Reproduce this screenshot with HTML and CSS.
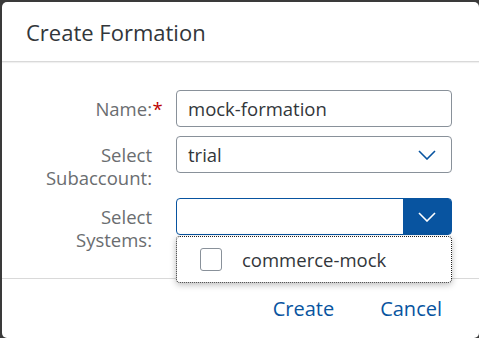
FILE: index.html
```html
<!DOCTYPE html>
<html>
<head>
<meta charset="utf-8">
<link rel="stylesheet" href="styles.css">
</head>
<body>
<div class="dialog">
  <div class="header"><h1 class="title">Create Formation</h1></div>
  <div class="content">
    <div class="form">
      <label class="label req">Name:<span class="ast">*</span></label>
      <div class="field"><span class="value">mock-formation</span></div>

      <label class="label two"><span class="line">Select</span><span class="line">Subaccount:</span></label>
      <div class="field select">
        <span class="value">trial</span>
        <span class="arrow">
          <svg width="18" height="10" viewBox="0 0 18 10"><path d="M1 1 L9 9 L17 1" fill="none" stroke="#0854a0" stroke-width="1.6"/></svg>
        </span>
      </div>

      <label class="label two"><span class="line">Select</span><span class="line">Systems:</span></label>
      <div class="combo">
        <div class="field select focused">
          <span class="value"></span>
          <span class="arrow filled">
            <svg width="18" height="10" viewBox="0 0 18 10"><path d="M1 1 L9 9 L17 1" fill="none" stroke="#ffffff" stroke-width="1.6"/></svg>
          </span>
        </div>
        <div class="popover">
          <div class="item">
            <span class="checkbox"></span>
            <span class="item-text">commerce-mock</span>
          </div>
        </div>
      </div>
    </div>
  </div>
  <div class="footer">
    <button class="btn">Create</button>
    <button class="btn">Cancel</button>
  </div>
</div>
</body>
</html>
```
FILE: styles.css
```css
html, body {
  margin: 0;
  padding: 0;
}
body {
  background: #3a3a3a;
  font-family: "Open Sans", "Noto Sans", sans-serif;
  overflow: hidden;
  width: 479px;
  height: 338px;
}
.dialog {
  margin: 2px 0 0 2px;
  width: 477px;
  height: 336px;
  background: #fff;
  border-radius: 5px;
  display: flex;
  flex-direction: column;
}
.header {
  height: 59px;
  flex: none;
  border-bottom: 1px solid #d9d9d9;
  box-shadow: 0 1px 1px rgba(0,0,0,0.06);
  display: flex;
  align-items: center;
  padding-left: 24px;
}
.title {
  margin: 0;
  font-size: 22px;
  font-weight: normal;
  color: #32363a;
}
.content {
  flex: 1;
  padding-top: 28px;
}
.form {
  display: grid;
  grid-template-columns: 161px 276px;
  column-gap: 13px;
  row-gap: 9px;
  align-items: start;
}
.label {
  text-align: right;
  padding-right: 11px;
  padding-top: 8px;
  font-size: 18.5px;
  line-height: 22px;
  color: #6a6d70;
}
.label.two {
  display: flex;
  flex-direction: column;
  align-items: flex-end;
  padding-top: 7px;
  line-height: 23px;
}
.label.req {
  padding-right: 0;
}
.ast {
  display: inline-block;
  width: 11px;
  text-align: center;
  color: #bb0000;
}
.field {
  box-sizing: border-box;
  height: 37px;
  border: 1px solid #89919a;
  border-radius: 4px;
  display: flex;
  align-items: center;
  padding-left: 11px;
  font-size: 18.5px;
  color: #32363a;
  background: #fff;
}
.value {
  flex: 1;
}
.select {
  padding-right: 0;
}
.arrow {
  width: 48px;
  align-self: stretch;
  display: flex;
  align-items: center;
  justify-content: center;
}
.arrow.filled {
  background: #0854a0;
  border-radius: 0 2px 2px 0;
}
.focused {
  border-color: #0854a0;
}
.combo {
  position: relative;
}
.popover {
  position: absolute;
  left: 0;
  top: 38px;
  box-sizing: border-box;
  width: 276px;
  height: 47px;
  background: #fff;
  border: 1px dotted #222;
  border-radius: 4px;
  box-shadow: 0 2px 6px rgba(0,0,0,0.25);
  display: flex;
  align-items: center;
}
.item {
  display: flex;
  align-items: center;
  padding-left: 23px;
}
.checkbox {
  box-sizing: border-box;
  width: 22px;
  height: 23px;
  border: 1px solid #89919a;
  border-radius: 3px;
  margin-right: 20px;
}
.item-text {
  font-size: 18.5px;
  color: #32363a;
}
.footer {
  flex: none;
  height: 59px;
  border-top: 1px solid #d9d9d9;
  display: flex;
  justify-content: flex-end;
  align-items: center;
  gap: 22px;
  padding-right: 25px;
}
.btn {
  font-family: inherit;
  font-size: 20px;
  color: #0854a0;
  background: none;
  border: none;
  padding: 4px 12px;
}
```
